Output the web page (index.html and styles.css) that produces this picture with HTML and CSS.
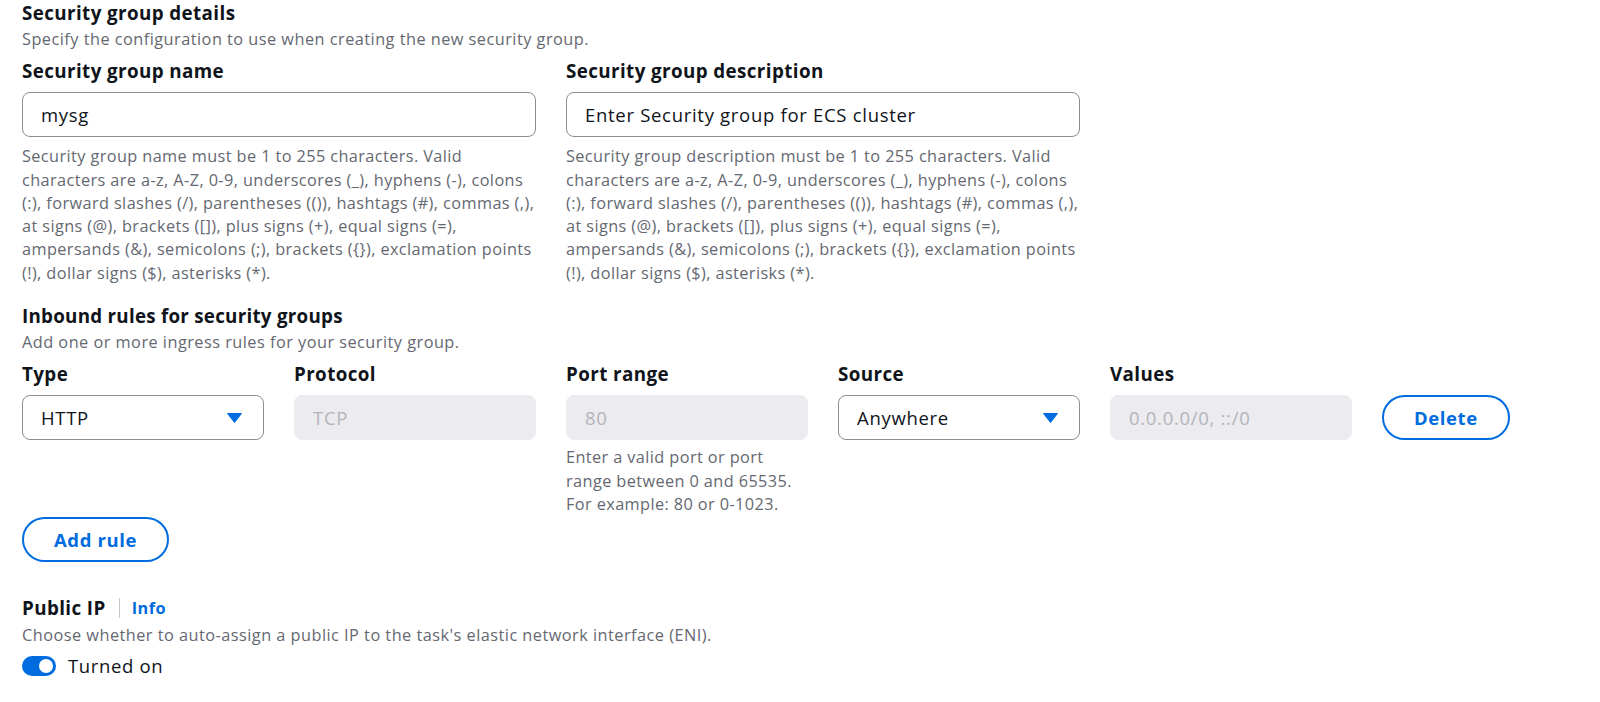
FILE: index.html
```html
<!DOCTYPE html>
<html lang="en">
<head>
  <meta charset="UTF-8">
  <meta name="viewport" content="width=device-width, initial-scale=1.0">
  <title>Security group</title>
  <link rel="stylesheet" href="styles.css">
</head>
<body>

  <section class="section">
    <h2 class="section-title">Security group details</h2>
    <p class="section-desc">Specify the configuration to use when creating the new security group.</p>

    <div class="details-grid">
      <div class="field">
        <label class="field-label" for="sgName">Security group name</label>
        <input class="text-input" id="sgName" type="text" value="mysg">
        <p class="constraint">Security group name must be 1 to 255 characters. Valid characters are a-z, A-Z, 0-9, underscores (_), hyphens (-), colons (:), forward slashes (/), parentheses (()), hashtags (#), commas (,), at signs (@), brackets ([]), plus signs (+), equal signs (=), ampersands (&amp;), semicolons (;), brackets ({}), exclamation points (!), dollar signs ($), asterisks (*).</p>
      </div>
      <div class="field">
        <label class="field-label" for="sgDesc">Security group description</label>
        <input class="text-input" id="sgDesc" type="text" value="Enter Security group for ECS cluster">
        <p class="constraint">Security group description must be 1 to 255 characters. Valid characters are a-z, A-Z, 0-9, underscores (_), hyphens (-), colons (:), forward slashes (/), parentheses (()), hashtags (#), commas (,), at signs (@), brackets ([]), plus signs (+), equal signs (=), ampersands (&amp;), semicolons (;), brackets ({}), exclamation points (!), dollar signs ($), asterisks (*).</p>
      </div>
    </div>
  </section>

  <section class="section inbound">
    <h2 class="section-title">Inbound rules for security groups</h2>
    <p class="section-desc">Add one or more ingress rules for your security group.</p>

    <div class="rule-row">
      <div class="field">
        <span class="field-label">Type</span>
        <button class="select" type="button">
          <span>HTTP</span>
          <svg width="15" height="10" viewBox="0 0 15 10"><path d="M0.5 0.5h14L7.5 9.5z" fill="#006ce0" stroke="#006ce0" stroke-linejoin="round"/></svg>
        </button>
      </div>
      <div class="field">
        <span class="field-label">Protocol</span>
        <input class="text-input" type="text" value="TCP" disabled>
      </div>
      <div class="field">
        <span class="field-label">Port range</span>
        <input class="text-input" type="text" value="80" disabled>
        <p class="constraint">Enter a valid port or port range between 0 and 65535. For example: 80 or 0-1023.</p>
      </div>
      <div class="field">
        <span class="field-label">Source</span>
        <button class="select" type="button">
          <span>Anywhere</span>
          <svg width="15" height="10" viewBox="0 0 15 10"><path d="M0.5 0.5h14L7.5 9.5z" fill="#006ce0" stroke="#006ce0" stroke-linejoin="round"/></svg>
        </button>
      </div>
      <div class="field">
        <span class="field-label">Values</span>
        <input class="text-input" type="text" value="0.0.0.0/0, ::/0" disabled>
      </div>
      <div class="rule-action">
        <button class="btn" type="button">Delete</button>
      </div>
    </div>

    <button class="btn add-rule" type="button">Add rule</button>
  </section>

  <section class="section public-ip">
    <div class="label-row">
      <span class="field-label">Public IP</span>
      <span class="divider"></span>
      <a class="info-link" href="#">Info</a>
    </div>
    <p class="section-desc">Choose whether to auto-assign a public IP to the task's elastic network interface (ENI).</p>
    <label class="toggle-row">
      <span class="toggle"><span class="knob"></span></span>
      Turned on
    </label>
  </section>

</body>
</html>
```

FILE: styles.css
```css
body {
  margin: 0;
  padding: 1px 22px 0;
  font-family: 'Open Sans', sans-serif;
  font-size: 16.3px;
  line-height: 23.3px;
  letter-spacing: 0.4px;
  color: #0f141a;
  background-color: #fff;
}

p {
  margin: 0;
}

.section-title {
  margin: 0;
  font-size: 18.8px;
  line-height: 24px;
  font-weight: 700;
  letter-spacing: 0.4px;
}

.inbound .section-title {
  letter-spacing: 0.25px;
}

.section-desc {
  margin-top: 3px;
  color: #656871;
  letter-spacing: 0.48px;
}

.details-grid {
  display: grid;
  grid-template-columns: repeat(2, 514px);
  column-gap: 30px;
  margin-top: 9px;
}

.field {
  display: flex;
  flex-direction: column;
}

.field-label {
  display: block;
  font-size: 18.8px;
  line-height: 22px;
  font-weight: 700;
  letter-spacing: 0.4px;
  margin-bottom: 10px;
}

.text-input {
  box-sizing: border-box;
  width: 100%;
  height: 45px;
  margin: 0;
  padding: 0 18px;
  border: 1px solid #8c8c94;
  border-radius: 8px;
  background: #fff;
  font-family: inherit;
  font-size: 18.5px;
  letter-spacing: 0.7px;
  color: #0f141a;
  outline: none;
}

.text-input:disabled {
  background-color: #ebebf0;
  border-color: #ebebf0;
  color: #b4b4bb;
}

.constraint {
  margin-top: 8px;
  color: #656871;
}

/* inbound rules */
.inbound {
  margin-top: 19px;
}

.rule-row {
  display: grid;
  grid-template-columns: repeat(5, 242px) auto;
  column-gap: 30px;
  align-items: start;
  margin-top: 9px;
}

.rule-row .constraint {
  margin-top: 6px;
}

.rule-action {
  padding-top: 32px;
}

.select {
  box-sizing: border-box;
  display: flex;
  align-items: center;
  justify-content: space-between;
  width: 100%;
  height: 45px;
  padding: 0 21px 0 18px;
  border: 1px solid #8c8c94;
  border-radius: 8px;
  background: #fff;
  font-family: inherit;
  font-size: 18.5px;
  letter-spacing: 0.7px;
  color: #0f141a;
  cursor: pointer;
}

.btn {
  box-sizing: border-box;
  height: 45px;
  padding: 0 30px;
  border: 2px solid #006ce0;
  border-radius: 23px;
  background: #fff;
  color: #006ce0;
  font-family: inherit;
  font-size: 18.5px;
  font-weight: 700;
  letter-spacing: 0.6px;
  cursor: pointer;
}

.add-rule {
  margin-top: 1px;
}

/* public ip */
.public-ip {
  margin-top: 34px;
}

.label-row {
  display: flex;
  align-items: center;
}

.label-row .field-label {
  margin-bottom: 0;
  line-height: 24px;
}

.divider {
  width: 1px;
  height: 20px;
  background-color: #c6c6cd;
  margin: 0 12px 0 13px;
}

.info-link {
  color: #006ce0;
  font-weight: 700;
  letter-spacing: 0.5px;
  text-decoration: none;
}

.public-ip .section-desc {
  margin-top: 4px;
}

.toggle-row {
  display: flex;
  align-items: center;
  gap: 12px;
  margin-top: 6px;
  font-size: 18.5px;
  line-height: 24px;
  letter-spacing: 0.65px;
}

.toggle {
  display: flex;
  align-items: center;
  justify-content: flex-end;
  box-sizing: border-box;
  width: 34px;
  height: 20px;
  padding: 0 3px;
  border-radius: 10px;
  background-color: #006ce0;
}

.knob {
  width: 14px;
  height: 14px;
  border-radius: 50%;
  background-color: #fff;
}
```
